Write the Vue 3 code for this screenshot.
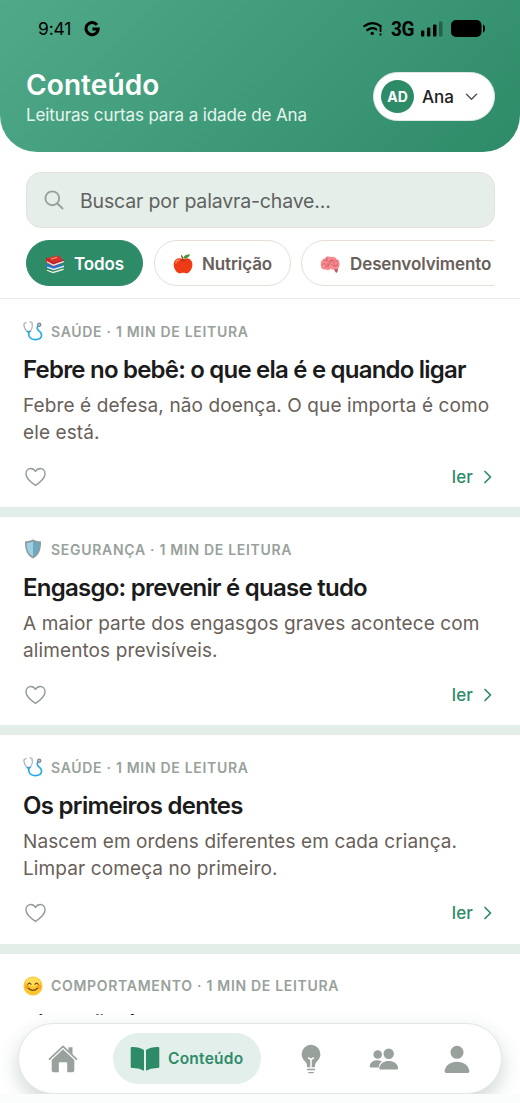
<script setup>
const filters = [
  { label: 'Todos', icon: 'books', active: true },
  { label: 'Nutrição', icon: 'apple' },
  { label: 'Desenvolvimento', icon: 'brain' },
]
const articles = [
  { icon: 'steth', topic: 'SAÚDE', title: 'Febre no bebê: o que ela é e quando ligar', lines: ['Febre é defesa, não doença. O que importa é como', 'ele está.'], cls: 't1' },
  { icon: 'shield', topic: 'SEGURANÇA', title: 'Engasgo: prevenir é quase tudo', lines: ['A maior parte dos engasgos graves acontece com', 'alimentos previsíveis.'], cls: 't2' },
  { icon: 'steth', topic: 'SAÚDE', title: 'Os primeiros dentes', lines: ['Nascem em ordens diferentes em cada criança.', 'Limpar começa no primeiro.'], cls: 't3' },
  { icon: 'smile', topic: 'COMPORTAMENTO', title: 'Birra não é manha', lines: [], cls: 't4' },
]
</script>

<template>
  <div class="screen">
    <svg width="0" height="0" class="defs">
      <symbol id="books" viewBox="0 0 20 20">
        <path d="M1 14.5 12 12.5 19 16 8 19.4 1 16.8z" fill="#2c8d49" />
        <path d="M2 15.8 8 17.8 18.6 14.6V16L8 19.2 1.8 16.8z" fill="#eef0e8" />
        <path d="M1 10.8 13 9 19.4 12.8 8.5 16.8 1 13.5z" fill="#2573c7" />
        <path d="M2.4 12.4 8.6 14.8 19 11.6V13L8.6 16.2 2 13.7z" fill="#e7eef2" />
        <path d="M1 4.2 13.4 1.2 19 7.4 8.3 12.5 1 8z" fill="#d92f31" />
        <path d="M2 7.2 8.3 10.6 18.8 6.6V8.2L8.3 12 2 8.6z" fill="#eee5df" />
        <path d="M1 4.3 8.3 9.4 19 6.2" fill="none" stroke="#9f2029" stroke-width="1" />
        <path d="m6 5 6-1.6" stroke="#f5bc56" stroke-width="1" />
      </symbol>
      <symbol id="apple" viewBox="0 0 20 20">
        <path d="M10 5.2C6.7 3.1.7 4.3.7 10.6c0 4.4 3.1 8.8 6 8.8 1.2 0 2-.6 3.4-.6s2.4.6 3.7.6c2.6 0 5.6-4.6 5.6-8.8 0-6-6-7.5-9.4-5.4z" fill="#ee3b16" />
        <path d="M3 9c0-2 1.5-3.1 3.1-3" fill="none" stroke="#ff8250" stroke-width="1.6" stroke-linecap="round" />
        <path d="M7.4 6.2c1.6 1 3.7 1 5.3-.1" fill="none" stroke="#b82c12" stroke-width="1" />
        <path d="M10.2 6.2Q9.6 3.5 8.4 1.4" fill="none" stroke="#754526" stroke-width="1.2" />
        <path d="M10.2 4C11 1.2 14 .2 17 .5 16 3.6 13.3 4.8 10.2 4z" fill="#48963a" />
      </symbol>
      <symbol id="brain" viewBox="0 0 20 20">
        <path d="M14.2 14.4h4l-.8 3.7-1.3.8-2-3.2z" fill="#b95761" />
        <path d="M1 12C-.2 7.200 3.200 4.800 5 4.300 7 1.700 10.100 2.400 11.300 3c3-.8 4.600.8 5.200 2 2.700 1.100 3.500 4 2.900 6 .4 3-1.800 4.400-4.100 4.300-2.300.8-3.800.1-4.900-.6-2 2.400-4.500 1.500-5.300.6C2.800 16 1 14.500 1 12z" fill="#f68d92" />
        <path d="M4 7q2-2 4 0t4-2M2 11q2-3 4 0t4-2 4 1 4-1M5 14q1-3 4-1m2-3q3 4 6 1M11 6q2 2 4 0M7 3v3m8 2 3-1M8 9v2" fill="none" stroke="#d95f6c" stroke-width=".9" stroke-linecap="round" />
      </symbol>
      <symbol id="steth" viewBox="0 0 20 20">
        <path d="M3 1.700 1.200 2.400c-.8 3 1.200 7.500 4.600 9.200C8.800 9.400 10 5 8.800 1.200L7 .8" fill="none" stroke="#a9b3ba" stroke-width="1.300" stroke-linecap="round" />
        <path d="M5.700 11.600c-.3 4.400 1.900 7 6.500 7 4.500 0 7.100-2.300 6.100-5.800-.8-2.600-4-2.900-4-5.500 0-2.200.7-3 2-3.300" fill="none" stroke="#2aa9ea" stroke-width="1.700" stroke-linecap="round" />
        <path d="M4.100 10q1.700 2.200 3.200-.1" fill="none" stroke="#2a9bdb" stroke-width="1.700" />
        <circle cx="16.200" cy="3.700" r="2.200" fill="#7e8b96" /><circle cx="16.200" cy="3.700" r="1" fill="#bbc6cc" />
      </symbol>
      <symbol id="shield" viewBox="0 0 20 20">
        <path d="M10 .5Q13.500 2.400 18 2.400c.2 8.500-2 13.700-8 17.100C4 16.100 1.800 10.900 2 2.400 6.500 2.400 10 .5 10 .5z" fill="#8c9ba1" />
        <path d="M10 2.500Q6.500 4 3.600 4c.1 6.800 1.800 10.800 6.400 13.700z" fill="#9fd0e2" />
        <path d="M10 2.500Q13.500 4 16.400 4c-.1 6.800-1.800 10.800-6.400 13.700z" fill="#6ea9bf" />
      </symbol>
      <symbol id="smile" viewBox="0 0 20 20">
        <circle cx="10" cy="10" r="9.500" fill="#fbc62d" />
        <ellipse cx="10" cy="6" rx="7" ry="4.500" fill="#ffdc55" />
        <circle cx="4" cy="11" r="2.200" fill="#f6a22d" /><circle cx="16" cy="11" r="2.200" fill="#f6a22d" />
        <path d="M4.800 8.300q1.600-2.500 3.200 0m4 0q1.600-2.500 3.200 0M5.500 12.300q4.500 4.300 9 0" fill="none" stroke="#72400f" stroke-width="1.200" stroke-linecap="round" />
      </symbol>
    </svg>

    <header class="header">
      <div class="status">
        <span class="time">9:41</span>
        <svg class="g" viewBox="0 0 16 16"><path d="M13 3.900A6.100 6.100 0 1 0 14.200 8.100H8.400" fill="none" stroke="#000" stroke-width="3" /></svg>
        <svg class="wifi" viewBox="0 0 20 16">
          <path d="M1.300 5.200Q9.500-1 17.700 5.200M4.300 9Q9 5.500 13.300 8.300" fill="none" stroke="#000" stroke-width="2.200" stroke-linecap="round" />
          <circle cx="9.200" cy="12.400" r="1.700" /><path d="M17.500 6v5M17.500 12.500v2" stroke="#000" stroke-width="1.800" />
        </svg>
        <span class="net">3G</span>
        <svg class="signal" viewBox="0 0 22 16"><rect y="9.500" width="3.300" height="6" rx="1" /><rect x="6" y="6.500" width="3.300" height="9" rx="1" /><rect x="12" y="3.500" width="3.500" height="12" rx="1" /><rect x="18" y=".5" width="3.500" height="15" rx="1" opacity=".35" /></svg>
        <svg class="battery" viewBox="0 0 34 17"><rect width="30.500" height="17" rx="5" /><path d="M32 4.500q2 .4 2 4t-2 4z" /></svg>
      </div>
      <div class="heading">
        <div>
          <h1>Conteúdo</h1>
          <p>Leituras curtas para a idade de Ana</p>
        </div>
        <button class="profile">
          <span class="avatar">AD</span><span class="name">Ana</span>
          <svg viewBox="0 0 12 8"><path d="m1 1.300 5 5 5-5" fill="none" stroke="#555" stroke-width="1.500" stroke-linecap="round" stroke-linejoin="round" /></svg>
        </button>
      </div>
    </header>

    <section class="tools">
      <div class="search">
        <svg viewBox="0 0 20 20"><circle cx="8.300" cy="8.300" r="6.900" /><path d="m13.500 13.500 5 5" /></svg>
        <span>Buscar por palavra-chave...</span>
      </div>
      <div class="filters">
        <button v-for="f in filters" :key="f.icon" :class="['chip', f.icon, { active: f.active }]">
          <svg><use :href="'#' + f.icon" /></svg><span>{{ f.label }}</span>
        </button>
      </div>
    </section>

    <main class="feed">
      <article v-for="(a, i) in articles" :key="i" class="card">
        <div class="meta"><svg><use :href="'#' + a.icon" /></svg><span>{{ a.topic }} · 1 MIN DE LEITURA</span></div>
        <h2 :class="a.cls">{{ a.title }}</h2>
        <template v-if="a.lines.length">
          <p><span v-for="l in a.lines" :key="l">{{ l }}</span></p>
          <div class="actions">
            <svg class="heart" viewBox="0 0 22 20"><path d="M11 18.800C5.500 15 1 11.300 1 6.500 1 3.300 3.200 1 6 1c2.200 0 4 1.200 5 3.100C12 2.200 13.800 1 16 1c2.800 0 5 2.300 5 5.500 0 4.800-4.500 8.500-10 12.300z" /></svg>
            <a>ler <svg class="chev" viewBox="0 0 8 14"><path d="m1 1.500 5.500 5.500L1 12.500" /></svg></a>
          </div>
        </template>
      </article>
    </main>

    <div class="dock">
      <nav>
        <svg class="home" viewBox="0 0 30 30"><path d="M1.500 15.200 15 2.300 28.500 15.200" fill="none" stroke="#98a19b" stroke-width="1.700" stroke-linecap="round" stroke-linejoin="round" /><path d="M20.500 3.200h4v7.200l-4-3.800z" /><path d="M15 5.300 26.300 16v10.300q0 1.900-1.900 1.900h-5.200V19q0-.8-.8-.8h-6.800q-.8 0-.8.800v9.200H5.600q-1.900 0-1.900-1.900V16z" /></svg>
        <div class="tab">
          <svg viewBox="0 0 30 26"><path d="M14 4Q9 .7 1.800 1 .7 1 .7 2.200v18.600q0 1.200 1.200 1.200Q9 21.600 14 24.800zM16 4Q21 .7 28.200 1q1.100 0 1.100 1.200v18.600q0 1.200-1.200 1.200-7.100-.4-12.100 2.800z" /></svg>
          <span>Conteúdo</span>
        </div>
        <svg class="bulb" viewBox="0 0 20 30"><path d="M10 .8A9.300 9.300 0 0 0 .6 10c0 3.400 1.500 5.500 3.500 7.500 1.500 1.600 1.800 2.500 1.800 4.200 0 1 .7 1.600 1.700 1.600h4.800c1 0 1.700-.6 1.700-1.600 0-1.700.4-2.600 1.800-4.200 2-2 3.500-4.100 3.500-7.500A9.300 9.300 0 0 0 10 .8z" /><path d="m7.500 14 2.500 1.500 2.500-1.500M10 15.500v7.300" fill="none" stroke="#fff" stroke-width="1.500" stroke-linecap="round" /><path d="M6.500 25.500h7M7.800 28.600h4.400" stroke="#98a19b" stroke-width="1.400" stroke-linecap="round" /></svg>
        <svg class="people" viewBox="0 0 30 22"><circle cx="8.700" cy="6.500" r="4.300" /><path d="M1.700 19.500Q.5 19.500.7 18C1.300 14.200 4.500 12.300 8.500 12.300q2.600 0 4.500 1.100c-2 1.300-3.100 3.300-3.300 6.100z" /><circle cx="19.700" cy="5.800" r="5.200" /><path d="M11.500 21.500q-1.400 0-1.200-1.600c.7-4.500 4.500-6.900 9.400-6.900s8.700 2.400 9.400 6.900q.2 1.600-1.200 1.600z" /></svg>
        <svg class="person" viewBox="0 0 26 28"><circle cx="13" cy="7.300" r="6.500" /><path d="M2.300 28Q.4 28 .6 26.200C1.300 20.300 6.500 16.800 13 16.800s11.700 3.500 12.400 9.400q.2 1.800-1.700 1.800z" /></svg>
      </nav>
    </div>
    <footer class="base"></footer>
  </div>
</template>

<style>
body { margin: 0; background: #fff; }
</style>
<style scoped>
* { box-sizing: border-box; }
.screen { position: relative; width: 520px; height: 1103px; overflow: hidden; background: #fff; font-family: Inter, "Liberation Sans", sans-serif; }
.defs { position: absolute; }
h1, h2, p { margin: 0; }
button { font: inherit; }
svg { display: block; flex: none; }
.header { height: 152px; border-radius: 0 0 37px 37px; background: linear-gradient(135deg, #50aa8a 0%, #2e8b68 100%); }
.status { height: 56px; display: flex; align-items: center; padding: 1px 35px 0 38px; }
.time { width: 46px; font-size: 17.500px; line-height: 20px; letter-spacing: -.2px; }
.g { width: 16px; height: 16px; }
.wifi { width: 20px; height: 16px; margin-left: auto; }
.net { width: 24px; margin: 0 6px 0 8px; font: 700 19px/20px Roboto, sans-serif; letter-spacing: -.4px; transform: scaleY(1.1); }
.signal { width: 22px; height: 16px; }
.battery { width: 34px; height: 17px; margin-left: 8px; }
.heading { display: flex; justify-content: space-between; align-items: flex-start; padding: 13px 25px 0 26px; color: #fff; }
h1 { font-size: 28px; line-height: 32px; font-weight: 600; letter-spacing: .1px; }
.heading p { margin-top: 3px; font-size: 17px; line-height: 22px; letter-spacing: -.12px; color: #e7f4ef; white-space: nowrap; }
.profile { display: flex; align-items: center; width: 122px; height: 49px; margin-top: 3px; padding: 0 16px 0 7px; border: 1px solid #dfe8e3; border-radius: 25px; background: #fff; color: #202020; }
.avatar { display: grid; place-items: center; width: 33px; height: 33px; border-radius: 50%; background: #2e8b68; color: #fff; font-size: 14px; font-weight: 700; }
.name { margin-left: 8px; font-size: 17px; font-weight: 500; }
.profile svg { width: 13px; height: 8px; margin-left: auto; }
.tools { height: 147px; padding: 20px 25px 0 26px; border-bottom: 1px solid #e9e9e7; }
.search { display: flex; align-items: center; gap: 16px; height: 56px; padding-left: 17px; border: 1px solid #e3e1da; border-radius: 15px; background: #e6eeea; color: #5e635f; font-size: 19.500px; letter-spacing: -.16px; }
.search span { padding-top: 1px; }
.search svg { width: 20px; height: 20px; fill: none; stroke: #98a19b; stroke-width: 1.900; stroke-linecap: round; }
.filters { display: flex; gap: 11px; margin-top: 12px; overflow: hidden; }
.chip { display: flex; align-items: center; flex: none; height: 46px; padding: 1px 0 0 18px; gap: 9px; border: 1px solid #e7ded7; border-radius: 23px; background: #fff; color: #68605b; font-size: 17px; letter-spacing: -.1px; font-weight: 600; white-space: nowrap; }
.chip svg { width: 20px; height: 20px; }
.chip.active { background: #2e8b68; border-color: #2e8b68; color: #fff; }
.books { width: 117px; }
.apple { width: 137px; }
.brain { width: 214px; margin-left: -1px; }
.brain svg { margin-right: 1px; }
.feed { height: 716px; overflow: hidden; }
.card { height: 218.200px; padding: 21px 28px 0 23px; border-bottom: 10px solid #e4eee8; }
.meta { display: flex; align-items: center; gap: 8px; height: 22px; color: #98a19b; font-size: 14px; font-weight: 600; letter-spacing: .7px; white-space: nowrap; }
.meta svg { width: 20px; height: 20px; }
h2 { margin-top: 13px; color: #1b1b1b; font-size: 24px; line-height: 30px; font-weight: 600; white-space: nowrap; }
.t1 { letter-spacing: -.79px; }
.t2 { letter-spacing: -.75px; }
.t3 { letter-spacing: -.7px; }
.t4 { margin-top: 12px; font-size: 23.500px; letter-spacing: -.7px; }
.card p { height: 54px; margin-top: 7px; color: #686059; font-size: 19px; line-height: 27px; letter-spacing: .11px; }
.card p span { display: block; white-space: nowrap; }
.actions { display: flex; align-items: center; justify-content: space-between; height: 30px; margin-top: 16px; padding-left: 2px; }
.heart { width: 21px; height: 20px; margin-top: -1px; fill: none; stroke: #929b95; stroke-width: 1.500; stroke-linejoin: round; }
.actions a { display: flex; align-items: center; gap: 11px; color: #2e8b68; font-size: 17px; font-weight: 500; letter-spacing: .15px; }
.chev { width: 8px; height: 14px; margin-top: -1px; fill: none; stroke: #2e8b68; stroke-width: 1.700; stroke-linecap: round; stroke-linejoin: round; }
.dock { position: absolute; left: 0; bottom: 9px; width: 520px; height: 110px; padding: 39px 18px 0; overflow: hidden; }
nav { position: relative; display: flex; align-items: center; height: 71px; padding: 0 31px 0 29px; border: 1px solid #e2e9e5; border-radius: 36px; background: #fff; box-shadow: 0 8px 20px rgba(35, 70, 65, .22); fill: #98a19b; }
.home { width: 30px; height: 30px; }
.tab { display: flex; align-items: center; gap: 8px; width: 148px; height: 51px; margin-left: 35px; padding-left: 17px; border-radius: 26px; background: #e3efea; color: #2e8b68; fill: #2e8b68; font-size: 15.500px; font-weight: 600; letter-spacing: .25px; }
.tab svg { width: 30px; height: 26px; }
.bulb { width: 20px; height: 30px; margin-left: 40px; }
.people { width: 30px; height: 22px; margin-left: 48px; }
.person { width: 26px; height: 28px; margin-left: 45px; }
.base { position: absolute; left: 0; bottom: 0; width: 520px; height: 9px; background: #fbfdfc; }
</style>
